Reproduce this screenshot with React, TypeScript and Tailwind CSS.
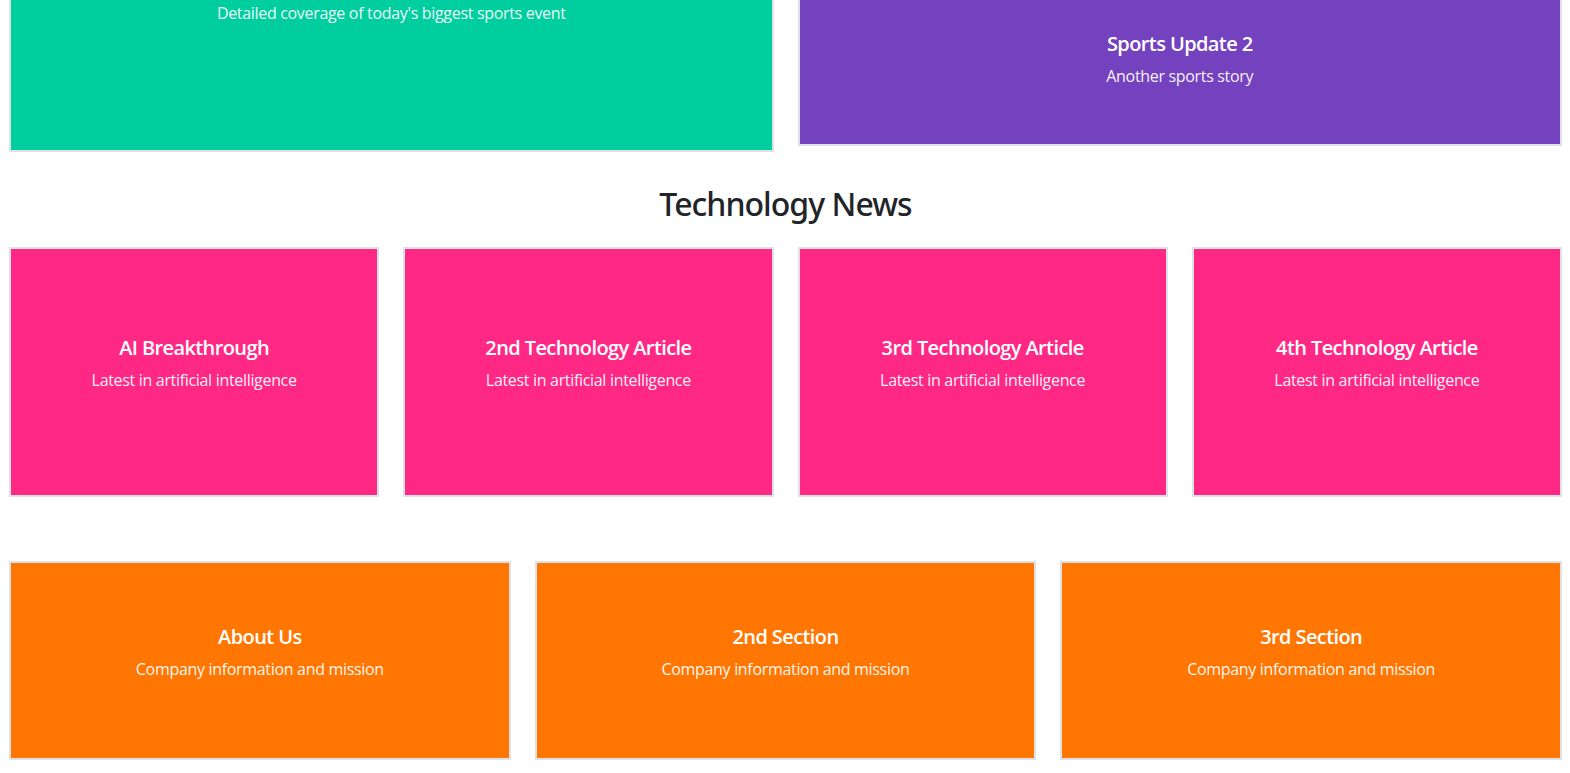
const techArticles = [
  "AI Breakthrough",
  "2nd Technology Article",
  "3rd Technology Article",
  "4th Technology Article",
];

const aboutSections = ["About Us", "2nd Section", "3rd Section"];

function Card({
  title,
  text,
  className,
}: {
  title: string;
  text: string;
  className: string;
}) {
  return (
    <div
      className={`flex flex-col items-center justify-center border-2 border-[#dee2e6] text-center text-white ${className}`}
    >
      <h5 className="mb-2 text-[20px] leading-[24px] font-semibold tracking-[-0.03em]">{title}</h5>
      <p className="mb-4 text-[16px] leading-[24px] tracking-[-0.02em] text-white/95">{text}</p>
    </div>
  );
}

export default function App() {
  return (
    <div
      className="min-h-screen overflow-hidden bg-white pr-2 pl-[9px] text-[#212529]"
      style={{ fontFamily: '"Segoe UI", "Open Sans", sans-serif' }}
    >
      {/* Sports */}
      <section className="-mt-[142px] grid grid-cols-2 items-start gap-6">
        <Card
          title="Big Game Tonight"
          text="Detailed coverage of today's biggest sports event"
          className="h-[294px] bg-[#00ce9e]"
        />
        <div className="flex flex-col gap-6">
          <Card
            title="Sports Update 1"
            text="Quick sports story"
            className="h-[108px] bg-[#7542bf]"
          />
          <Card
            title="Sports Update 2"
            text="Another sports story"
            className="h-[156px] bg-[#7542bf]"
          />
        </div>
      </section>

      {/* Technology */}
      <section className="mt-[33px]">
        <h2
          className="mb-6 text-center text-[32px] leading-[38px] font-medium tracking-[-0.03em]"
          style={{ fontFamily: '"Segoe UI", "Noto Sans", sans-serif' }}
        >
          Technology News
        </h2>
        <div className="grid grid-cols-4 gap-6">
          {techArticles.map((t) => (
            <Card
              key={t}
              title={t}
              text="Latest in artificial intelligence"
              className="h-[250px] bg-[#ff2885]"
            />
          ))}
        </div>
      </section>

      {/* About */}
      <section className="mt-16 grid grid-cols-3 gap-6 pb-10">
        {aboutSections.map((t) => (
          <Card
            key={t}
            title={t}
            text="Company information and mission"
            className="h-[199px] bg-[#ff7702]"
          />
        ))}
      </section>
    </div>
  );
}
